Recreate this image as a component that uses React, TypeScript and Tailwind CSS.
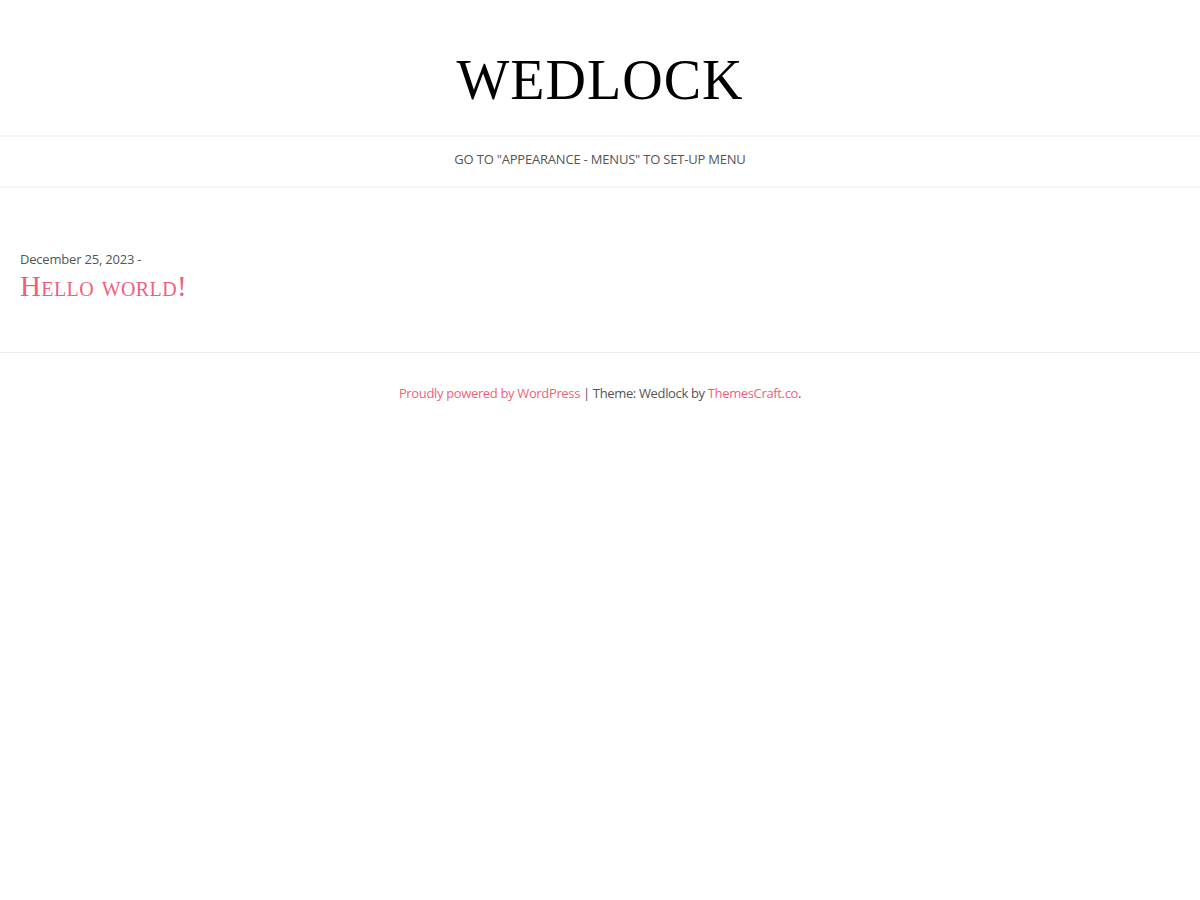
export default function App() {
  return (
    <div className="min-h-screen bg-white text-[#555555]" style={{ fontFamily: '"Open Sans", "Liberation Sans", sans-serif' }}>
      {/* Header */}
      <header className="h-[135px] flex items-center justify-center">
        <h1
          className="text-[56px] leading-none text-black tracking-[1px] pt-[24px]"
          style={{ fontFamily: '"Liberation Serif", serif' }}
        >
          WEDLOCK
        </h1>
      </header>

      {/* Nav */}
      <nav className="h-[53px] border-y-2 border-[#f5f5f5] flex items-center justify-center pb-[4px]">
        <span className="text-[13px] text-[#555555] tracking-[-0.2px]">GO TO "APPEARANCE - MENUS" TO SET-UP MENU</span>
      </nav>

      {/* Post */}
      <main className="px-5 pt-[61px] pb-[48px] border-b border-[#ebebeb]">
        <div className="text-[13px] leading-[20px] tracking-[-0.2px]">December 25, 2023 -</div>
        <h2
          className="text-[29px] leading-[35px] text-[#ef5f7d] tracking-[0.4px]"
          style={{ fontFamily: '"Liberation Serif", serif', fontVariant: 'small-caps' }}
        >
          Hello world!
        </h2>
      </main>

      {/* Footer */}
      <footer className="pt-[31px] text-center text-[13px] tracking-[-0.35px]">
        <a className="text-[#ef5f7d]">Proudly powered by WordPress</a>
        <span> | Theme: Wedlock by </span>
        <a className="text-[#ef5f7d]">ThemesCraft.co</a>.
      </footer>
    </div>
  )
}
